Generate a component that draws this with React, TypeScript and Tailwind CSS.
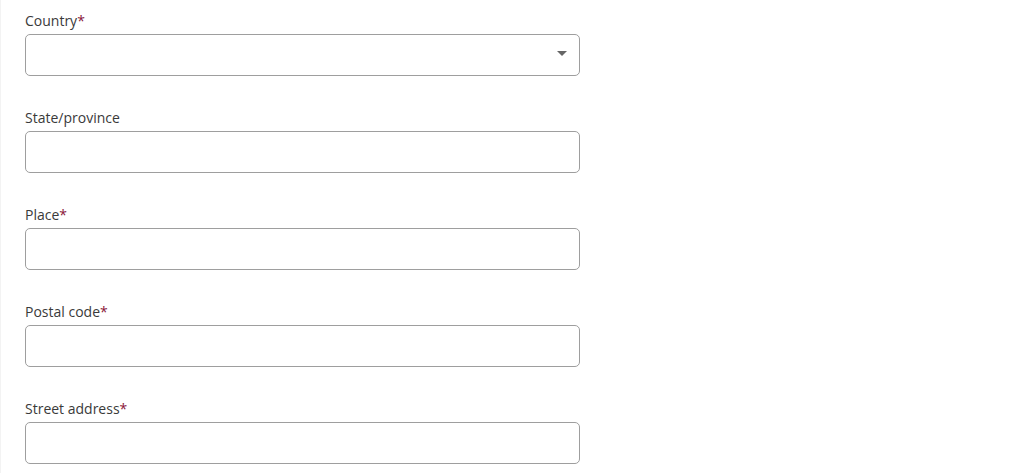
const fields = [
  { label: 'Country', required: true, select: true },
  { label: 'State/province', required: false },
  { label: 'Place', required: true },
  { label: 'Postal code', required: true },
  { label: 'Street address', required: true },
];

export default function App() {
  return (
    <div className="min-h-[473px] w-full border-l border-[#f3f3f3] bg-white pl-6 pt-[11px] font-['Open_Sans',sans-serif] text-[#3a3a3a]">
      <div className="flex w-[555px] flex-col gap-[32px]">
        {fields.map((f) => (
          <div key={f.label} className="flex flex-col">
            <label className="text-sm leading-5">
              {f.label}
              {f.required && <span className="text-[#8a1538]">*</span>}
            </label>
            <div className="relative mt-[3px]">
              <div className="h-[42px] w-full rounded-[5px] border border-[#9e9e9e] bg-white" />
              {f.select && (
                <svg
                  className="absolute right-[13px] top-[17px]"
                  width="10"
                  height="6"
                  viewBox="0 0 10 6"
                >
                  <path d="M0 0h10L5 5z" fill="#666" />
                </svg>
              )}
            </div>
          </div>
        ))}
      </div>
    </div>
  );
}
